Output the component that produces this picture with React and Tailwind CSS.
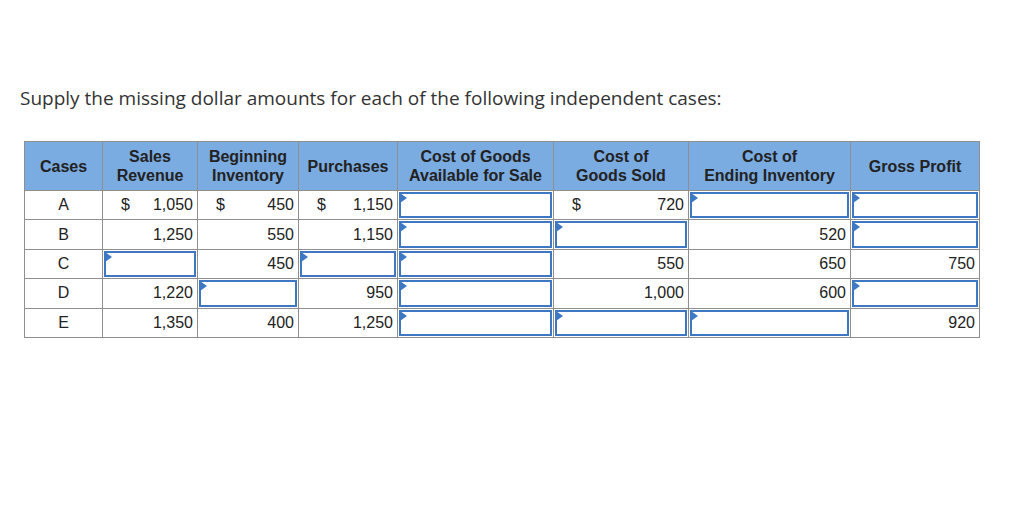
import React from 'react';

const rows = [
  ['A', { v: '1,050', d: true }, { v: '450', d: true }, { v: '1,150', d: true }, null, { v: '720', d: true }, null, null],
  ['B', { v: '1,250' }, { v: '550' }, { v: '1,150' }, null, null, { v: '520' }, null],
  ['C', null, { v: '450' }, null, null, { v: '550' }, { v: '650' }, { v: '750' }],
  ['D', { v: '1,220' }, null, { v: '950' }, null, { v: '1,000' }, { v: '600' }, null],
  ['E', { v: '1,350' }, { v: '400' }, { v: '1,250' }, null, null, null, { v: '920' }],
];

const InputBox = () => (
  <div className="relative h-[26.4px] border-2 border-[#3f78c2] bg-white">
    <span className="absolute left-[-1px] top-[-1px] h-0 w-0 border-y-[5px] border-l-[7px] border-y-transparent border-l-[#3f78c2]" />
  </div>
);

const Cell = ({ c }) => {
  if (c === null) {
    return (
      <td className="border border-[#8f8f8f] p-[1px]">
        <InputBox />
      </td>
    );
  }
  return (
    <td className="border border-[#8f8f8f] h-[28.4px] px-[4px] text-right">
      <div className="flex items-center justify-between">
        <span className="pl-[14px]">{c.d ? '$' : ''}</span>
        <span>{c.v}</span>
      </div>
    </td>
  );
};

const Th = ({ children }) => (
  <th className="border border-[#8f8f8f] bg-[#7aabe1] px-1 text-center align-middle text-[16px] font-bold leading-[19px] text-[#222]">
    {children}
  </th>
);

export default function App() {
  return (
    <div className="min-h-[517px] w-[1024px] bg-white pt-[86px]" style={{ fontFamily: '"Liberation Sans", Arial, sans-serif' }}>
      <p className="pl-[20px] text-[19px] leading-[24px] text-[#333]" style={{ fontFamily: '"Open Sans", Lato, sans-serif' }}>
        Supply the missing dollar amounts for each of the following independent cases:
      </p>
      <table className="ml-[24px] mt-[31px] table-fixed border-collapse text-[16px] text-[#222]">
        <colgroup>
          <col className="w-[78px]" />
          <col className="w-[95px]" />
          <col className="w-[101px]" />
          <col className="w-[99px]" />
          <col className="w-[156px]" />
          <col className="w-[135px]" />
          <col className="w-[162px]" />
          <col className="w-[129px]" />
        </colgroup>
        <thead>
          <tr className="h-[49px]">
            <Th>Cases</Th>
            <Th>Sales<br />Revenue</Th>
            <Th>Beginning<br />Inventory</Th>
            <Th>Purchases</Th>
            <Th>Cost of Goods<br />Available for Sale</Th>
            <Th>Cost of<br />Goods Sold</Th>
            <Th>Cost of<br />Ending Inventory</Th>
            <Th>Gross Profit</Th>
          </tr>
        </thead>
        <tbody>
          {rows.map((r) => (
            <tr key={r[0]} className="h-[28.4px]">
              <td className="border border-[#8f8f8f] text-center">{r[0]}</td>
              {r.slice(1).map((c, i) => (
                <Cell key={i} c={c} />
              ))}
            </tr>
          ))}
        </tbody>
      </table>
    </div>
  );
}
